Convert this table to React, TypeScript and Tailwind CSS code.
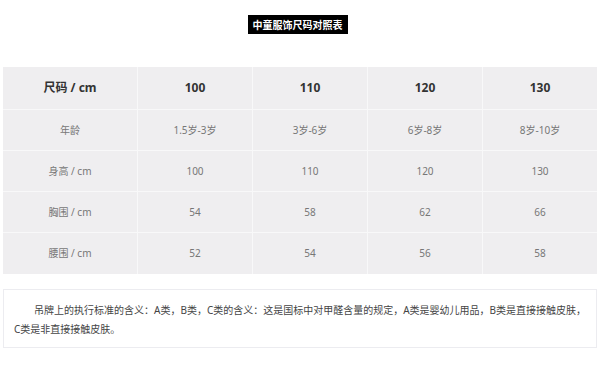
const font = { fontFamily: '"Noto Sans", "Noto Sans CJK SC", sans-serif' };

const rows = [
  ["年龄", "1.5岁-3岁", "3岁-6岁", "6岁-8岁", "8岁-10岁"],
  ["身高 / cm", "100", "110", "120", "130"],
  ["胸围 / cm", "54", "58", "62", "66"],
  ["腰围 / cm", "52", "54", "56", "58"],
];

const head = ["尺码 / cm", "100", "110", "120", "130"];

export default function App() {
  return (
    <div className="w-[600px] h-[369px] bg-white overflow-hidden" style={font}>
      <div className="flex justify-center pt-[15px] pr-[5px]">
        <div className="bg-black text-white text-[10px] font-bold h-[19px] px-[5px] flex items-center leading-none">
          中童服饰尺码对照表
        </div>
      </div>

      <div className="mx-[3px] mt-[33px] grid grid-cols-[135px_115px_115px_115px_1fr] bg-[#efeef0]">
        {head.map((h, i) => (
          <div
            key={h}
            className={`h-[43px] flex items-center justify-center text-[12px] font-bold text-[#333] border-b border-[#f8f8f9] ${
              i < 4 ? "border-r" : ""
            }`}
          >
            {h}
          </div>
        ))}
        {rows.map((row, r) =>
          row.map((c, i) => (
            <div
              key={`${r}-${i}`}
              className={`h-[41px] flex items-center justify-center text-[10px] text-[#777] border-[#f8f8f9] ${
                i < 4 ? "border-r" : ""
              } ${r < 3 ? "border-b" : ""}`}
            >
              {c}
            </div>
          ))
        )}
      </div>

      <div className="mx-[3px] mt-[15px] h-[59px] border border-[#ececf0] pt-[11px] pl-[10px] pr-[8px] text-[10px] leading-[19px] text-[#444]">
        <p className="indent-[20px]">
          吊牌上的执行标准的含义：A类，B类，C类的含义：这是国标中对甲醛含量的规定，A类是婴幼儿用品，B类是直接接触皮肤，C类是非直接接触皮肤。
        </p>
      </div>
    </div>
  );
}
